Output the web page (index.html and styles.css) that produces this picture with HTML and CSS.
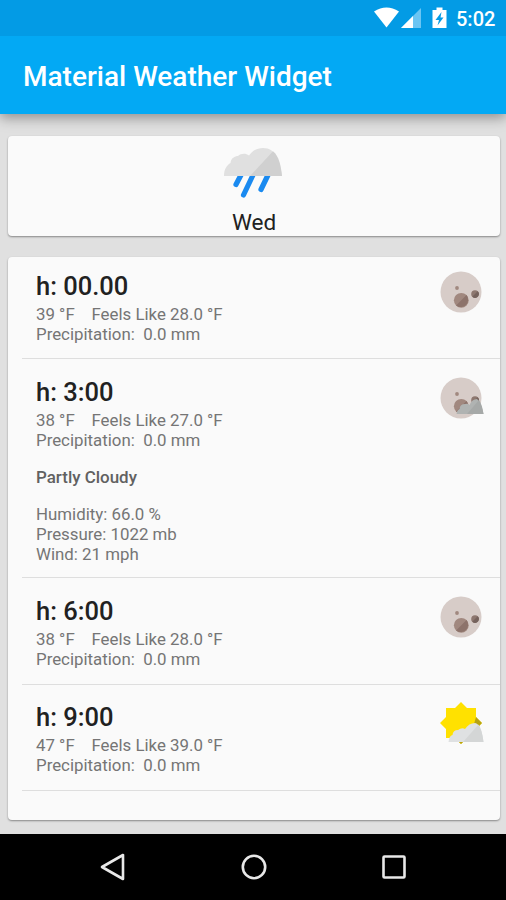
FILE: index.html
```html
<!DOCTYPE html>
<html lang="en">
<head>
<meta charset="utf-8">
<title>Material Weather Widget</title>
<link rel="stylesheet" href="styles.css">
</head>
<body>
<svg width="0" height="0" class="defs" aria-hidden="true">
  <defs>
    <symbol id="moon" viewBox="0 0 44 44">
      <circle cx="21" cy="21" r="20.5" fill="#d7ccc8"/>
      <circle cx="17" cy="17" r="1.9" fill="#a1887f"/>
      <circle cx="21.3" cy="29.3" r="7.4" fill="#a1887f"/>
      <path d="M26.5 24.1a7.4 7.4 0 0 1-10.4 10.4z" fill="#8d736b"/>
      <circle cx="35" cy="23" r="3.8" fill="#8d776f"/>
      <path d="M37.700 20.3a3.8 3.8 0 0 1-5.4 5.4z" fill="#75625c"/>
    </symbol>
  </defs>
</svg>
<header class="status-bar">
  <svg class="status-icons" width="80" height="24" viewBox="0 0 80 24">
    <path d="M0 4.500Q12.500-3.500 25 4.500L12.500 20.500Z" fill="#fff"/>
    <path d="M27 21L47 1V21Z" fill="#6bc5f3"/>
    <path d="M27 21L39 9V21Z" fill="#fff"/>
    <path d="M58.500 3H62.500V.5H68.500V3H72.500V21H58.500Z" fill="#fff"/>
    <path d="M67.500 5L61.500 13H65L63.500 18.500L69.500 10.500H66.500Z" fill="#039be5"/>
  </svg>
  <span class="clock">5:02</span>
</header>
<div class="app-bar"><h1>Material Weather Widget</h1></div>
<main>
  <section class="card day">
    <svg class="rain" width="60" height="52" viewBox="0 0 60 52">
      <path d="M17 27L12 36.500M29 27L19.500 47M44 27L37 41.500" stroke="#1a8af0" stroke-width="5.200" stroke-linecap="round"/>
      <path d="M0 28C0 21 3 17 6.500 15C7 10 11 8 14 8C17 5 22 5 25 7.500C28 3 33 0 39 0C52 0 56 13 58 28Z" fill="#e0e0e0"/>
      <path d="M49 3.200C55 8 57 18 58 28H26Z" fill="#d0d0d0"/>
    </svg>
    <div class="day-name">Wed</div>
  </section>
  <section class="card hours">
    <article class="hour">
      <div><h2>h: 00.00</h2><p>39 °F    Feels Like 28.0 °F
Precipitation:  0.0 mm</p></div>
      <svg class="icon" viewBox="0 0 44 44"><use href="#moon"/></svg>
    </article>
    <article class="hour">
      <div><h2>h: 3:00</h2><p>38 °F    Feels Like 27.0 °F
Precipitation:  0.0 mm</p>
      <h3>Partly Cloudy</h3>
      <p>Humidity: 66.0 %
Pressure: 1022 mb
Wind: 21 mph</p></div>
      <svg class="icon" viewBox="0 0 44 44"><use href="#moon"/>
        <path d="M16.500 37Q17 33 19.500 32Q20 27 25 27Q28 26 29.500 28Q32 22 37 22Q41 25 43.500 37Z" fill="#b0b3b2"/>
        <path d="M39 23Q42 27 43.500 37H27Z" fill="#a6a9a8"/>
      </svg>
    </article>
    <article class="hour">
      <div><h2>h: 6:00</h2><p>38 °F    Feels Like 28.0 °F
Precipitation:  0.0 mm</p></div>
      <svg class="icon" viewBox="0 0 44 44"><use href="#moon"/></svg>
    </article>
    <article class="hour">
      <div><h2>h: 9:00</h2><p>47 °F    Feels Like 39.0 °F
Precipitation:  0.0 mm</p></div>
      <svg class="icon" viewBox="0 0 44 44">
        <path d="M21 0L27 6H36V15L42 21L36 27V36H27L21 42L15 36H6V27L0 21L6 15V6H15Z" fill="#ffe100"/>
        <path d="M36 15L42 21L38 25L34 22ZM18 39H24L21 42Z" fill="#b7a313"/>
        <path d="M8.500 40Q9 34 12.500 33Q13 28 18 28Q22 25 25 27Q29 21 35 21Q41 22 43.500 40Z" fill="#dfe1e2"/>
        <path d="M38.500 22.500Q42 27 43.500 40H23Z" fill="#d4d6d6"/>
      </svg>
    </article>
  </section>
</main>
<nav>
  <svg viewBox="0 0 28 28"><path d="M24 2V26L3 14Z"/></svg>
  <svg viewBox="0 0 28 28"><circle cx="14" cy="14" r="11.200"/></svg>
  <svg viewBox="0 0 28 28"><rect x="3.500" y="3.500" width="21" height="21" rx="1"/></svg>
</nav>
</body>
</html>
```
FILE: styles.css
```css
* { box-sizing: border-box; }
body {
  margin: 0;
  width: 506px;
  height: 900px;
  overflow: hidden;
  display: flex;
  flex-direction: column;
  background: #e0e0e0;
  font-family: Roboto, "Liberation Sans", sans-serif;
}
.defs { position: absolute; }
h1, h2, h3, p { margin: 0; }
svg { display: block; }

.status-bar {
  height: 36px;
  flex: none;
  background: #039be5;
  display: flex;
  align-items: flex-start;
  justify-content: flex-end;
  padding: 7px 9px 0 0;
}
.clock {
  width: 41px;
  margin-left: 2px;
  font-size: 20px;
  line-height: 25px;
  font-weight: 500;
  color: #fff;
}
.app-bar {
  height: 78px;
  flex: none;
  background: #03a9f4;
  box-shadow: 0 4px 12px rgba(0, 0, 0, .36);
  clip-path: inset(0 0 -24px 0);
  padding: 23px 23px 0;
}
h1 {
  font-size: 28px;
  line-height: 36px;
  font-weight: 500;
  color: #fff;
  white-space: nowrap;
}
main {
  flex: 1;
  padding: 22px 6px 14px 8px;
  display: flex;
  flex-direction: column;
  gap: 21px;
}
.card {
  background: #fafafa;
  border-radius: 4px;
  box-shadow: 0 1px 2px rgba(0, 0, 0, .4);
}
.day {
  height: 100px;
  flex: none;
  display: flex;
  flex-direction: column;
  align-items: center;
  padding-top: 12px;
}
.rain { flex: none; }
.day-name {
  font-size: 22.5px;
  line-height: 28px;
  color: #212121;
  margin-top: 8px;
}
.hours { flex: 1; }
.hour {
  height: 107px;
  margin-left: 14px;
  padding: 17px 16px 0 14px;
  border-bottom: 1px solid #dedede;
  display: flex;
  justify-content: space-between;
}
.hour:first-child { height: 102px; padding-top: 13px; }
.hour:nth-child(2) { height: 219px; }
.hour:last-child { height: 106px; padding-top: 16px; }
h2 {
  font-size: 25.5px;
  line-height: 32px;
  font-weight: 500;
  color: #212121;
  margin-bottom: 3px;
}
p {
  font-size: 16.85px;
  line-height: 19.7px;
  color: #757575;
  white-space: pre;
}
h3 {
  font-size: 16.95px;
  line-height: 20px;
  font-weight: 500;
  color: #616161;
  margin: 17px 0 18px;
}
.icon {
  width: 44px;
  height: 44px;
  margin-top: 1px;
}
nav {
  height: 66px;
  flex: none;
  background: #000;
  display: flex;
  justify-content: center;
  align-items: center;
  gap: 112.5px;
  padding-left: 1px;
}
nav svg {
  width: 28px;
  height: 28px;
  fill: none;
  stroke: #e8e8e8;
  stroke-width: 2.6;
  stroke-linejoin: round;
}
```
